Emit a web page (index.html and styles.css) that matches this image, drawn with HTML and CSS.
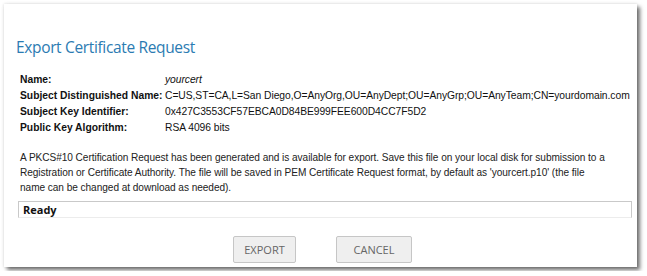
FILE: index.html
```html
<!DOCTYPE html>
<html lang="en">
  <head>
    <meta charset="UTF-8" />
    <title>Export Certificate Request</title>
    <link rel="stylesheet" href="styles.css">
  </head>
  <body>
    <div class="dialog">
      <h1 class="title">Export Certificate Request</h1>
      <div class="details">
        <div class="label">Name:</div>
        <div class="value name">yourcert</div>
        <div class="label">Subject Distinguished Name:</div>
        <div class="value">C=US,ST=CA,L=San Diego,O=AnyOrg,OU=AnyDept;OU=AnyGrp;OU=AnyTeam;CN=yourdomain.com</div>
        <div class="label">Subject Key Identifier:</div>
        <div class="value">0x427C3553CF57EBCA0D84BE999FEE600D4CC7F5D2</div>
        <div class="label">Public Key Algorithm:</div>
        <div class="value">RSA 4096 bits</div>
      </div>
      <p class="info">
        A PKCS#10 Certification Request has been generated and is available for export. Save this file on your local disk for submission to a<br>
        Registration or Certificate Authority. The file will be saved in PEM Certificate Request format, by default as 'yourcert.p10' (the file<br>
        name can be changed at download as needed).
      </p>
      <div class="status">Ready</div>
      <div class="actions">
        <button class="btn export">EXPORT</button>
        <button class="btn cancel">CANCEL</button>
      </div>
    </div>
  </body>
</html>
```

FILE: styles.css
```css
:root {
  box-sizing: border-box;
  font-family: "Liberation Sans", Arial, sans-serif;
}

*,
::before,
::after {
  box-sizing: inherit;
}

body {
  margin: 0;
  background: #ffffff;
}

.dialog {
  margin: 4px;
  width: 633px;
  height: 263px;
  background: #ffffff;
  box-shadow: 0 0 3px rgba(0, 0, 0, 0.15), 3px 3px 4px rgba(0, 0, 0, 0.55);
  padding: 33px 0 0 12px;
}

.title {
  margin: 0;
  font-family: "Open Sans", sans-serif;
  font-weight: 400;
  font-size: 15.5px;
  line-height: 20px;
  color: #2b7bb2;
  letter-spacing: -0.35px;
}

.details {
  display: grid;
  grid-template-columns: 145px auto;
  margin: 15px 0 0 4px;
  font-size: 10.3px;
  line-height: 16px;
  color: #111;
  white-space: nowrap;
}

.label {
  font-weight: 700;
}

.value {
  letter-spacing: -0.05px;
}

.name {
  font-style: italic;
}

.info {
  margin: 14px 0 0 4px;
  font-size: 10.1px;
  letter-spacing: -0.05px;
  line-height: 15px;
  color: #222;
  white-space: nowrap;
}

.status {
  margin: 6px 0 0 2px;
  width: 614px;
  height: 17px;
  border: 1px solid #c9c9c9;
  border-bottom-color: #ececec;
  padding: 0 4px;
  font-family: "Open Sans", sans-serif;
  font-weight: 700;
  font-size: 11px;
  line-height: 15px;
  color: #111;
}

.actions {
  display: flex;
  justify-content: center;
  gap: 40px;
  margin-top: 18px;
  padding-right: 8px;
}

.btn {
  height: 27px;
  padding: 0;
  background: #efefef;
  border: 1px solid #c6c6c6;
  border-radius: 2px;
  font-family: "Open Sans", sans-serif;
  font-size: 11px;
  color: #666;
}

.export {
  width: 63px;
}

.cancel {
  width: 76px;
}
```
